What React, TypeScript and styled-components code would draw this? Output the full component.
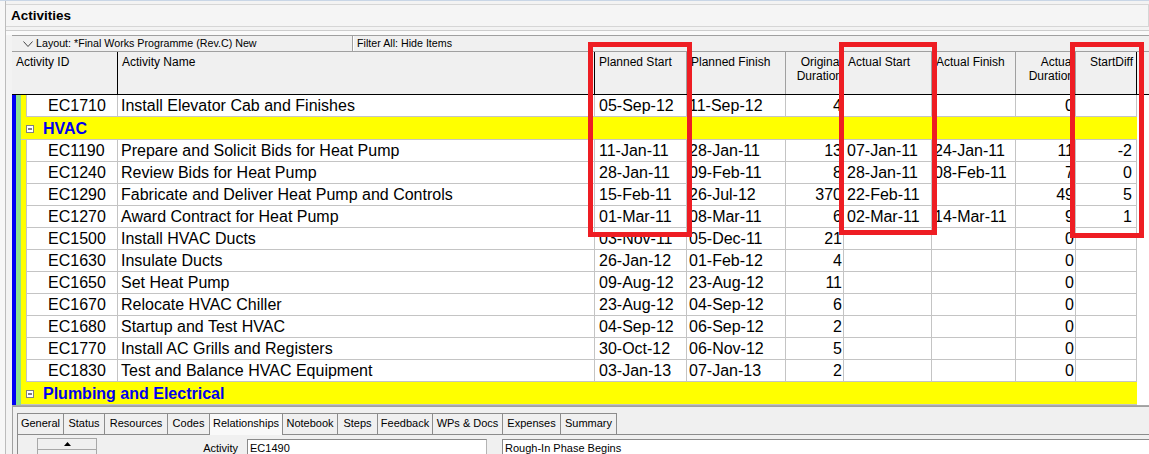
import React from "react";
import styled, { createGlobalStyle } from "styled-components";

const GlobalStyle = createGlobalStyle`
  html, body { margin: 0; padding: 0; background: #f7f7f7; }
  body { font-family: "Liberation Sans", Arial, sans-serif; color: #000; }
  * { box-sizing: border-box; }
`;

const DATA_COLS = "92px 477px 92px 99px 58px 88px 84px 60px 61px";
const HEAD_COLS = "106px 477px 92px 99px 58px 88px 84px 60px 61px";
const GRID_LINE = "#c4c4c4";

const Page = styled.div`
  position: relative;
  width: 1149px;
  height: 454px;
  overflow: hidden;
  background: #f7f7f7;
  border-top: 1px solid #c9d6e6;
  display: flex;
  flex-direction: column;
`;

const Frame = styled.div`
  margin-left: 5px;
  padding-top: 3px;
  border-left: 1px solid #bcbcbc;
  flex: 1;
  display: flex;
  flex-direction: column;
  background: #f3f3f3;
`;

const TitleBar = styled.div`
  height: 23px;
  border: 1px solid #d6d6d6;
  border-left: none;
  background: #f5f5f5;
  padding-left: 5px;
  font-weight: bold;
  font-size: 13.5px;
  line-height: 22px;
`;

const Divider = styled.div`
  margin-top: 3px;
  height: 5px;
  border-top: 1px solid #cdcdcd;
  background: #fafafa;
`;

const Grid = styled.div`
  margin-left: 6px;
  background: #fff;
  border-bottom: 1px solid #a8a8a8;
  display: flex;
  flex-direction: column;
`;

const LayoutBar = styled.div`
  display: flex;
  height: 17px;
  background: #f0f0f0;
  border-top: 1px solid #a0a0a0;
  border-bottom: 1px solid #a0a0a0;
  font-size: 10.7px;
  line-height: 15px;
`;

const LayoutCell = styled.div`
  width: 341px;
  display: flex;
  align-items: center;
  padding-left: 11px;
  border-right: 1px solid #a0a0a0;
  white-space: nowrap;
  svg { margin-right: 3px; }
`;

const FilterCell = styled.div`
  flex: 1;
  border-left: 1px solid #fff;
  padding-left: 3px;
  white-space: nowrap;
`;

const HeaderRow = styled.div`
  display: grid;
  grid-template-columns: ${HEAD_COLS};
  height: 43px;
  border-bottom: 1px solid #000;
  background: #f0f0f0;
`;

const HeaderCell = styled.div<{ $align?: string; $dark?: boolean; $pr?: number }>`
  border-right: 1px solid ${(p) => (p.$dark ? "#000" : "#a0a0a0")};
  padding: 3px ${(p) => p.$pr ?? 3}px 0 ${(p) => (p.$align === "right" ? 2 : 4)}px;
  font-size: 12px;
  line-height: 14px;
  overflow: hidden;
  text-align: ${(p) => p.$align ?? "left"};
`;

const Body = styled.div`
  background: #fff;
`;

const Row = styled.div`
  display: grid;
  grid-template-columns: 14px ${DATA_COLS};
  width: 1125px;
  height: 22px;
`;

const Strip = styled.div`
  display: flex;
  height: 100%;
`;

const Band = styled.span<{ $color: string; $w: number }>`
  display: block;
  width: ${(p) => p.$w}px;
  height: 100%;
  background: ${(p) => p.$color};
`;

const Cell = styled.div<{ $align?: string; $pl?: number; $pr?: number; $first?: boolean }>`
  border-right: 1px solid ${GRID_LINE};
  border-bottom: 1px solid ${GRID_LINE};
  border-left: ${(p) => (p.$first ? `1px solid ${GRID_LINE}` : "none")};
  padding: 0 ${(p) => p.$pr ?? 2}px 0 ${(p) => p.$pl ?? 3}px;
  font-size: 16px;
  line-height: 21px;
  white-space: nowrap;
  overflow: hidden;
  text-align: ${(p) => p.$align ?? "left"};
`;

const GroupRow = styled.div`
  display: flex;
  width: 1125px;
  height: 23px;
`;

const GroupBand = styled.div`
  flex: 1;
  display: flex;
  align-items: center;
  padding-left: 5px;
  background: #ffff00;
  border-bottom: 1px solid ${GRID_LINE};
  svg { flex: none; margin-top: 2px; }
`;

const GroupLabel = styled.span`
  margin-left: 9px;
  font-size: 16px;
  font-weight: bold;
  color: #0000f0;
  line-height: 21px;
`;

const Detail = styled.div`
  margin-left: 6px;
  flex: 1;
  border-top: 1px solid #a0a0a0;
  border-left: 1px solid #a0a0a0;
  background: #f0f0f0;
  padding: 6px 0 0 4px;
  display: flex;
  flex-direction: column;
`;

const TabStrip = styled.div`
  display: flex;
  height: 21px;
`;

const Tab = styled.div<{ $w: number; $active?: boolean; $first?: boolean }>`
  width: ${(p) => p.$w}px;
  border-top: 1px solid #8c8c8c;
  border-right: 1px solid #8c8c8c;
  border-left: ${(p) => (p.$first ? "1px solid #8c8c8c" : "none")};
  background: ${(p) => (p.$active ? "#f9f9f9" : "#f0f0f0")};
  height: ${(p) => (p.$active ? 22 : 21)}px;
  position: relative;
  z-index: ${(p) => (p.$active ? 1 : 0)};
  font-size: 11px;
  line-height: 19px;
  text-align: center;
  white-space: nowrap;
`;

const TabBody = styled.div`
  flex: 1;
  border-top: 1px solid #8c8c8c;
  border-left: 1px solid #8c8c8c;
  display: flex;
  align-items: flex-start;
  padding-top: 3px;
`;

const SpinBox = styled.div`
  margin-left: 19px;
  width: 60px;
  display: flex;
  flex-direction: column;
`;

const SpinButton = styled.div<{ $top?: boolean }>`
  height: 12px;
  border: 1px solid #a8a8a8;
  border-top: ${(p) => (p.$top ? "1px solid #a8a8a8" : "none")};
  display: flex;
  align-items: center;
  justify-content: center;
  background: #f0f0f0;
`;

const FieldLabel = styled.div`
  width: 141px;
  margin-top: 3px;
  text-align: right;
  font-size: 11px;
  line-height: 14px;
`;

const Field = styled.div<{ $w?: number; $ml: number }>`
  margin-left: ${(p) => p.$ml}px;
  margin-top: 1px;
  ${(p) => (p.$w ? `width: ${p.$w}px;` : "flex: 1;")}
  height: 22px;
  background: #fff;
  border: 1px solid #8a8a8a;
  border-right: ${(p) => (p.$w ? "1px solid #b4b4b4" : "none")};
  padding: 1px 2px 0;
  font-size: 11px;
  line-height: 14px;
  white-space: nowrap;
`;

const RedBox = styled.div<{ $l: number; $t: number; $w: number; $h: number }>`
  position: absolute;
  left: ${(p) => p.$l}px;
  top: ${(p) => p.$t}px;
  width: ${(p) => p.$w}px;
  height: ${(p) => p.$h}px;
  border: 5px solid #ee1d23;
  pointer-events: none;
`;

type Act = {
  id: string;
  name: string;
  ps: string;
  pf: string;
  od: string;
  as?: string;
  af?: string;
  ad: string;
  sd?: string;
};

type Item = { group: string } | Act;

const items: Item[] = [
  { id: "EC1710", name: "Install Elevator Cab and Finishes", ps: "05-Sep-12", pf: "11-Sep-12", od: "4", ad: "0" },
  { group: "HVAC" },
  { id: "EC1190", name: "Prepare and Solicit Bids for Heat Pump", ps: "11-Jan-11", pf: "28-Jan-11", od: "13", as: "07-Jan-11", af: "24-Jan-11", ad: "11", sd: "-2" },
  { id: "EC1240", name: "Review Bids for Heat Pump", ps: "28-Jan-11", pf: "09-Feb-11", od: "8", as: "28-Jan-11", af: "08-Feb-11", ad: "7", sd: "0" },
  { id: "EC1290", name: "Fabricate and Deliver Heat Pump and Controls", ps: "15-Feb-11", pf: "26-Jul-12", od: "370", as: "22-Feb-11", ad: "49", sd: "5" },
  { id: "EC1270", name: "Award Contract for Heat Pump", ps: "01-Mar-11", pf: "08-Mar-11", od: "6", as: "02-Mar-11", af: "14-Mar-11", ad: "9", sd: "1" },
  { id: "EC1500", name: "Install HVAC Ducts", ps: "03-Nov-11", pf: "05-Dec-11", od: "21", ad: "0" },
  { id: "EC1630", name: "Insulate Ducts", ps: "26-Jan-12", pf: "01-Feb-12", od: "4", ad: "0" },
  { id: "EC1650", name: "Set Heat Pump", ps: "09-Aug-12", pf: "23-Aug-12", od: "11", ad: "0" },
  { id: "EC1670", name: "Relocate HVAC Chiller", ps: "23-Aug-12", pf: "04-Sep-12", od: "6", ad: "0" },
  { id: "EC1680", name: "Startup and Test HVAC", ps: "04-Sep-12", pf: "06-Sep-12", od: "2", ad: "0" },
  { id: "EC1770", name: "Install AC Grills and Registers", ps: "30-Oct-12", pf: "06-Nov-12", od: "5", ad: "0" },
  { id: "EC1830", name: "Test and Balance HVAC Equipment", ps: "03-Jan-13", pf: "07-Jan-13", od: "2", ad: "0" },
  { group: "Plumbing and Electrical" },
];

const tabs: { label: string; w: number; active?: boolean }[] = [
  { label: "General", w: 47 },
  { label: "Status", w: 41 },
  { label: "Resources", w: 63 },
  { label: "Codes", w: 42 },
  { label: "Relationships", w: 73, active: true },
  { label: "Notebook", w: 55 },
  { label: "Steps", w: 40 },
  { label: "Feedback", w: 55 },
  { label: "WPs & Docs", w: 70 },
  { label: "Expenses", w: 58 },
  { label: "Summary", w: 56 },
];

const DownTriangle = () => (
  <svg width="10" height="6" viewBox="0 0 10 6">
    <polyline points="0.5,0.5 5,5.5 9.5,0.5" fill="none" stroke="#444" strokeWidth="1" />
  </svg>
);

const Toggle = () => (
  <svg width="8" height="8" viewBox="0 0 8 8">
    <rect x="0.5" y="0.5" width="7" height="7" fill="#fff" stroke="#808080" />
    <line x1="2" y1="4" x2="6" y2="4" stroke="#000" />
  </svg>
);

const Arrow = ({ up }: { up?: boolean }) => (
  <svg width="7" height="4" viewBox="0 0 7 4">
    <polygon points={up ? "0,4 3.5,0 7,4" : "0,0 3.5,4 7,0"} fill="#000" />
  </svg>
);

const ActivityRow = ({ a }: { a: Act }) => (
  <Row>
    <Strip>
      <Band $color="#0000f4" $w={4} />
      <Band $color="#8fe08f" $w={5} />
      <Band $color="#ffff00" $w={5} />
    </Strip>
    <Cell $first $pl={21}>{a.id}</Cell>
    <Cell $pl={3}>{a.name}</Cell>
    <Cell $pl={4}>{a.ps}</Cell>
    <Cell $pl={2}>{a.pf}</Cell>
    <Cell $align="right" $pr={1}>{a.od}</Cell>
    <Cell $pl={3}>{a.as ?? ""}</Cell>
    <Cell $pl={2}>{a.af ?? ""}</Cell>
    <Cell $align="right" $pr={1}>{a.ad}</Cell>
    <Cell $align="right" $pr={4}>{a.sd ?? ""}</Cell>
  </Row>
);

const Group = ({ name }: { name: string }) => (
  <GroupRow>
    <Strip>
      <Band $color="#0000f4" $w={4} />
      <Band $color="#8fe08f" $w={5} />
    </Strip>
    <GroupBand>
      <Toggle />
      <GroupLabel>{name}</GroupLabel>
    </GroupBand>
  </GroupRow>
);

export default function App() {
  return (
    <>
      <GlobalStyle />
      <Page>
        <Frame>
          <TitleBar>Activities</TitleBar>
          <Divider />
          <Grid>
            <LayoutBar>
              <LayoutCell>
                <DownTriangle />
                Layout: *Final Works Programme (Rev.C) New
              </LayoutCell>
              <FilterCell>Filter All: Hide Items</FilterCell>
            </LayoutBar>
            <HeaderRow>
              <HeaderCell $dark>Activity ID</HeaderCell>
              <HeaderCell $dark>Activity Name</HeaderCell>
              <HeaderCell>Planned Start</HeaderCell>
              <HeaderCell>Planned Finish</HeaderCell>
              <HeaderCell $align="right" $pr={1}>Original Duration</HeaderCell>
              <HeaderCell>Actual Start</HeaderCell>
              <HeaderCell>Actual Finish</HeaderCell>
              <HeaderCell $align="right" $pr={1}>Actual Duration</HeaderCell>
              <HeaderCell $align="right" $dark $pr={3}>StartDiff</HeaderCell>
            </HeaderRow>
            <Body>
              {items.map((it, i) =>
                "group" in it ? <Group key={i} name={it.group} /> : <ActivityRow key={i} a={it} />
              )}
            </Body>
          </Grid>
          <Detail>
            <TabStrip>
              {tabs.map((t, i) => (
                <Tab key={t.label} $w={t.w} $active={t.active} $first={i === 0}>
                  {t.label}
                </Tab>
              ))}
            </TabStrip>
            <TabBody>
              <SpinBox>
                <SpinButton $top>
                  <Arrow up />
                </SpinButton>
                <SpinButton>
                  <Arrow />
                </SpinButton>
              </SpinBox>
              <FieldLabel>Activity</FieldLabel>
              <Field $ml={9} $w={240}>EC1490</Field>
              <Field $ml={15}>Rough-In Phase Begins</Field>
            </TabBody>
          </Detail>
        </Frame>
        <RedBox $l={588} $t={41} $w={104} $h={195} />
        <RedBox $l={839} $t={41} $w={98} $h={193} />
        <RedBox $l={1070} $t={41} $w={74} $h={196} />
      </Page>
    </>
  );
}
